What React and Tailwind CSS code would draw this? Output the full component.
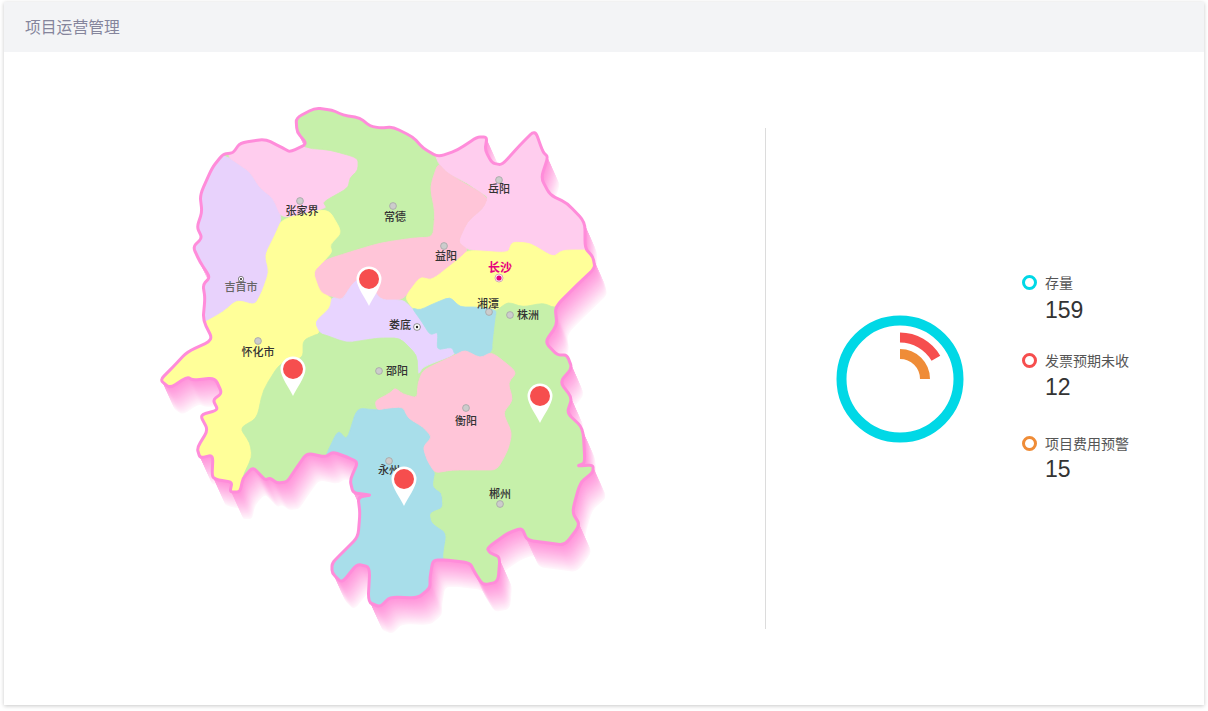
const smooth = (pts, k = 0.3) => {
  let d = "";
  pts.forEach((p, i) => {
    const prev = pts[(i - 1 + pts.length) % pts.length];
    const next = pts[(i + 1) % pts.length];
    const a = [p[0] + (prev[0] - p[0]) * k, p[1] + (prev[1] - p[1]) * k];
    const b = [p[0] + (next[0] - p[0]) * k, p[1] + (next[1] - p[1]) * k];
    d += `${i ? "L" : "M"}${a[0]} ${a[1]}Q${p[0]} ${p[1]} ${b[0]} ${b[1]}`;
  });
  return d + "Z";
};

const OUTLINE = [
  [315,108],[332,110],[343,115],[360,118],[370,126],[380,128],[393,127],[413,137],[423,148],[438,157],[458,150],[477,137],[487,137],[485,150],[492,163],[502,165],[520,145],[535,130],[543,152],[548,157],[541,178],[550,195],[567,203],[585,222],[585,248],[593,257],[595,268],[577,285],[555,307],[557,325],[545,342],[557,355],[567,355],[572,368],[560,382],[572,398],[567,413],[583,428],[585,463],[577,466],[593,465],[593,472],[580,483],[572,512],[580,525],[565,545],[547,543],[527,540],[522,528],[508,533],[487,548],[490,553],[500,557],[498,582],[483,585],[475,573],[470,563],[448,560],[433,560],[430,577],[430,588],[418,598],[390,597],[380,607],[368,602],[370,567],[357,564],[342,583],[332,573],[332,563],[343,552],[358,537],[360,513],[358,497],[372,495],[353,493],[350,480],[358,462],[347,457],[333,452],[325,457],[307,453],[297,467],[287,482],[277,483],[270,478],[265,480],[253,467],[243,478],[240,492],[230,492],[232,482],[218,480],[212,477],[213,455],[200,458],[197,448],[208,430],[200,415],[218,410],[213,400],[222,393],[215,378],[193,380],[187,377],[170,388],[160,380],[173,367],[187,352],[213,340],[203,320],[205,298],[203,285],[210,277],[200,262],[193,247],[202,238],[197,227],[202,212],[200,195],[212,168],[223,154],[233,153],[240,143],[265,139],[283,148],[290,152],[307,144],[297,132],[296,118],
];

const REGIONS = [
  // 湘西
  { fill: "#e8d2fc", pts: [[228,157],[237,163],[250,172],[260,188],[273,198],[282,218],[275,235],[265,255],[269,272],[262,292],[255,305],[237,300],[223,312],[200,325],[170,250],[200,150]] },
  // 张家界
  { fill: "#ffcdee", pts: [[228,157],[232,135],[265,130],[310,135],[330,150],[358,158],[358,170],[350,178],[348,188],[323,202],[327,208],[282,219],[273,198],[260,188],[250,172],[237,163]] },
  // 常德
  { fill: "#c6f0aa", pts: [[290,95],[445,115],[438,163],[430,187],[435,212],[433,237],[413,238],[380,243],[350,252],[325,262],[332,252],[330,245],[342,232],[327,208],[323,202],[348,188],[350,178],[358,170],[358,158],[330,150],[305,148],[285,130]] },
  // 岳阳
  { fill: "#ffcdee", pts: [[438,163],[447,173],[467,183],[480,192],[488,197],[483,208],[467,222],[458,242],[468,250],[508,253],[512,242],[530,243],[553,257],[563,250],[600,250],[625,240],[625,120],[470,120],[432,145]] },
  // 益阳
  { fill: "#ffc5d8", pts: [[438,163],[430,187],[435,212],[433,237],[413,238],[380,243],[350,252],[325,260],[313,272],[320,295],[332,296],[342,300],[353,283],[365,275],[380,300],[403,300],[420,277],[432,280],[460,258],[468,250],[458,242],[467,222],[483,208],[488,197],[447,173]] },
  // 怀化
  { fill: "#ffff99", pts: [[282,219],[328,208],[342,232],[330,245],[332,252],[325,260],[313,272],[320,292],[332,298],[330,308],[315,322],[320,333],[303,340],[303,358],[280,363],[263,390],[257,418],[240,428],[250,443],[252,457],[242,478],[242,495],[225,505],[190,440],[145,385],[200,325],[223,312],[237,300],[255,305],[262,292],[269,272],[265,255],[275,235]] },
  // 长沙
  { fill: "#ffff99", pts: [[405,297],[420,277],[432,280],[460,258],[468,250],[508,253],[512,242],[530,243],[553,257],[563,250],[595,250],[610,268],[577,290],[555,308],[543,303],[523,307],[508,302],[497,310],[477,307],[460,307],[450,297],[435,303],[420,310],[412,308]] },
  // 娄底
  { fill: "#e8d4ff", pts: [[332,297],[342,300],[353,283],[365,275],[380,300],[403,300],[412,308],[422,322],[430,335],[438,332],[437,350],[452,347],[456,354],[423,367],[418,375],[417,355],[400,338],[380,338],[365,340],[347,343],[320,333],[315,322],[330,308]] },
  // 湘潭
  { fill: "#a8deea", pts: [[412,308],[420,310],[435,303],[450,297],[460,307],[477,307],[497,310],[495,325],[492,352],[480,358],[465,350],[455,355],[452,347],[437,350],[438,332],[430,335],[422,322]] },
  // 邵阳
  { fill: "#c6f0aa", pts: [[303,340],[320,333],[347,343],[365,340],[380,338],[400,338],[417,355],[418,375],[418,383],[417,398],[403,394],[393,388],[380,395],[377,403],[357,408],[347,440],[338,430],[325,457],[325,475],[297,490],[243,500],[242,478],[252,457],[250,443],[240,428],[257,418],[263,390],[280,363],[303,358]] },
  // 永州
  { fill: "#a8deea", pts: [[357,408],[377,410],[388,408],[403,407],[408,418],[423,427],[432,437],[423,447],[427,460],[435,473],[433,487],[442,493],[443,508],[430,513],[432,523],[447,533],[443,557],[446,625],[320,625],[320,500],[325,457],[338,430],[347,440]] },
  // 株洲 郴州
  { fill: "#c6f0aa", pts: [[497,310],[508,302],[523,307],[543,303],[555,308],[625,300],[625,560],[500,600],[448,575],[443,557],[447,533],[432,523],[430,513],[443,508],[442,493],[433,487],[435,473],[452,470],[497,470],[508,450],[512,433],[503,413],[513,400],[508,383],[517,372],[492,352],[495,325]] },
  // 衡阳
  { fill: "#ffc5d8", pts: [[418,383],[423,370],[455,355],[465,350],[480,358],[492,352],[517,372],[508,383],[513,400],[503,413],[512,433],[508,450],[497,470],[477,470],[452,470],[435,473],[427,460],[423,447],[432,437],[423,427],[408,418],[403,407],[388,408],[377,410],[375,401],[390,393],[395,388],[403,394],[417,398]] },
];

const LABELS = [
  { text: "张家界", x: 302, y: 215 },
  { text: "常德", x: 395, y: 221 },
  { text: "岳阳", x: 499, y: 193 },
  { text: "益阳", x: 446, y: 260 },
  { text: "吉首市", x: 241, y: 291, fill: "#666" },
  { text: "怀化市", x: 258, y: 356 },
  { text: "湘潭", x: 488, y: 308 },
  { text: "株洲", x: 528, y: 319 },
  { text: "娄底", x: 400, y: 329 },
  { text: "邵阳", x: 397, y: 375 },
  { text: "衡阳", x: 466, y: 425 },
  { text: "永州", x: 389, y: 474 },
  { text: "郴州", x: 500, y: 498 },
];

const DOTS = [[300,201],[393,206],[499,180],[444,246],[258,341],[489,312],[510,315],[379,371],[466,408],[389,461],[500,504]];
const PINS = [[369,279],[293,369],[404,479],[540,396]];
const DEPTH = 27;
const STEPS = Array.from({ length: DEPTH }, (_, i) => DEPTH - i);

const LEGEND = [
  { label: "存量", value: "159", ring: "border-[#00d8e6]", gap: "", numberGap: "mt-[3px]" },
  { label: "发票预期未收", value: "12", ring: "border-[#f64e4e]", gap: "mt-[27px]", numberGap: "mt-[2px]" },
  { label: "项目费用预警", value: "15", ring: "border-[#ef8c37]", gap: "mt-[33px]", numberGap: "mt-[1px]" },
];

function HunanMap() {
  const outline = smooth(OUTLINE);
  return (
    <svg viewBox="150 95 470 540" className="ml-[146px] mt-[43px] h-[540px] w-[470px] shrink-0 self-start">
      <defs>
        <clipPath id="province">
          <path d={outline} />
        </clipPath>
      </defs>
      <g className="blur-[0.5px]">
        {STEPS.map((i) => {
          const t = Math.pow(i / DEPTH, 1.2);
          return (
            <path
              key={i}
              d={outline}
              transform={`translate(${i * 0.45} ${i})`}
              fill={`rgb(255 ${Math.round(148 + 98 * t)} ${Math.round(218 + 33 * t)})`}
            />
          );
        })}
        <path d={outline} fill="#c6f0aa" />
        <g clipPath="url(#province)">
          {REGIONS.map((r) => (
            <path key={r.pts[1].join()} d={smooth(r.pts)} fill={r.fill} stroke={r.fill} strokeWidth="0.8" />
          ))}
        </g>
        <path d={outline} fill="none" stroke="#ff8cda" strokeWidth="3" strokeLinejoin="round" />
      </g>
      {DOTS.map(([x, y]) => (
        <circle key={`${x}-${y}`} cx={x} cy={y} r="3.4" fill="#ccc" stroke="#a5a5a5" strokeWidth="0.8" />
      ))}
      <circle cx="241" cy="279" r="2.6" fill="#fff" stroke="#666" strokeWidth="0.8" />
      <circle cx="241" cy="279" r="1" fill="#222" />
      <circle cx="417" cy="327" r="3.4" fill="#fff" stroke="#777" strokeWidth="0.8" />
      <circle cx="417" cy="327" r="1.2" fill="#222" />
      <circle cx="499" cy="278" r="4" fill="#fff" stroke="#c9a" strokeWidth="0.8" />
      <circle cx="499" cy="278" r="2.6" fill="#e6007e" />
      {LABELS.map((l) => (
        <text
          key={l.text}
          x={l.x}
          y={l.y}
          textAnchor="middle"
          fill={l.fill || "#333"}
          className="text-[11px] font-medium [font-family:'Noto_Sans_CJK_SC',sans-serif]"
        >
          {l.text}
        </text>
      ))}
      <text x="500" y="272" textAnchor="middle" fill="#e6007e" className="text-[12px] font-bold [font-family:'Noto_Sans_CJK_SC',sans-serif]">
        长沙
      </text>
      {PINS.map(([x, y]) => (
        <g key={x}>
          <path
            d={`M${x} ${y + 27}C${x - 3} ${y + 20} ${x - 12.5} ${y + 8} ${x - 12.5} ${y}A12.5 12.5 0 0 1 ${x + 12.5} ${y}C${x + 12.5} ${y + 8} ${x + 3} ${y + 20} ${x} ${y + 27}Z`}
            fill="#fff"
          />
          <circle cx={x} cy={y} r="10" fill="#f64e4e" />
        </g>
      ))}
    </svg>
  );
}

function Gauge() {
  return (
    <svg viewBox="0 0 128 128" className="ml-[69.5px] h-[128px] w-[128px] shrink-0">
      <circle cx="64" cy="64" r="58.5" fill="none" stroke="#00d8e6" strokeWidth="10" />
      <path d="M64 22.5A41.5 41.5 0 0 1 99.9 43.2" fill="none" stroke="#f64e4e" strokeWidth="10" />
      <path d="M64 39A25 25 0 0 1 89 64" fill="none" stroke="#ef8c37" strokeWidth="10" />
    </svg>
  );
}

export default function App() {
  return (
    <div className="h-[711px] w-[1208px] bg-white px-[4px] pt-[2px] [font-family:'Noto_Sans_CJK_SC',sans-serif]">
      <div className="flex h-[703px] flex-col bg-white shadow-[0_1px_4px_rgba(0,0,0,0.22)]">
        <div className="flex h-[50px] items-center bg-[#f3f4f6] px-[21px] text-[15.8px] text-[#85859c]">项目运营管理</div>
        <div className="flex flex-1 items-center">
          <div className="flex w-[761px] self-stretch">
            <HunanMap />
          </div>
          <div className="h-[501px] w-px bg-[#dcdcdc]" />
          <Gauge />
          <div className="mb-[2px] ml-[58.5px] flex flex-col">
            {LEGEND.map((item) => (
              <div key={item.label} className={item.gap}>
                <div className="flex h-[20px] items-center gap-[8px] text-[14px] text-[#555]">
                  <span className={`h-[15px] w-[15px] rounded-full border-[3px] ${item.ring}`} />
                  <span>{item.label}</span>
                </div>
                <div className={`${item.numberGap} pl-[23px] text-[23px] leading-[28px] text-[#333] [font-family:'Liberation_Sans',sans-serif]`}>
                  {item.value}
                </div>
              </div>
            ))}
          </div>
        </div>
      </div>
    </div>
  );
}
